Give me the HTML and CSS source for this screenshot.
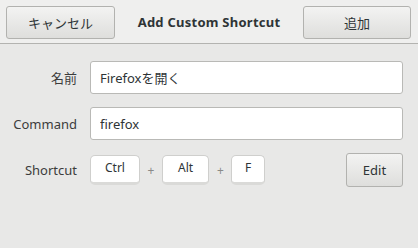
FILE: index.html
```html
<!doctype html>
<html lang="ja">
<head>
<meta charset="utf-8">
<meta name="viewport" content="width=device-width, initial-scale=1">
<title>Add Custom Shortcut</title>
<link rel="stylesheet" href="styles.css">
</head>
<body>

<div class="header">
	<button type="button" class="btn btn--cancel">キャンセル</button>
	<h1>Add Custom Shortcut</h1>
	<button type="button" class="btn btn--add">追加</button>
</div>

<div class="form">
	<label for="name">名前</label>
	<input type="text" id="name" value="Firefoxを開く">

	<label for="command">Command</label>
	<input type="text" id="command" value="firefox">

	<span class="label">Shortcut</span>
	<div class="shortcut">
		<span class="key">Ctrl</span>
		<span class="plus">+</span>
		<span class="key">Alt</span>
		<span class="plus">+</span>
		<span class="key">F</span>
		<button type="button" class="btn btn--edit">Edit</button>
	</div>
</div>

</body>
</html>
```

FILE: styles.css
```css
body {
	margin: 0;
	padding: 0;
	background: #e8e8e7;
	color: #2e3436;
	font-family: 'Noto Sans', 'Noto Sans CJK JP', sans-serif;
	font-size: 13px;
}

.header {
	display: flex;
	align-items: flex-start;
	justify-content: space-between;
	height: 37px;
	padding: 6px 7px 0 6px;
	background: #efefee;
	border-bottom: 1px solid #b3b3b0;
}

h1 {
	margin: 0;
	line-height: 33px;
	font-size: 13px;
	font-weight: 700;
	letter-spacing: 0.25px;
	color: #2e3436;
}

.btn {
	height: 33px;
	padding: 0;
	border: 1px solid #b2b2af;
	border-radius: 3px;
	background: linear-gradient(#f3f3f2, #dededc);
	color: #2e3436;
	font-family: inherit;
	font-size: 13px;
}
.btn--cancel {
	width: 109px;
}
.btn--add {
	width: 108px;
}

.form {
	display: grid;
	grid-template-columns: 77px 1fr;
	column-gap: 13px;
	row-gap: 13px;
	align-items: center;
	padding: 17px 15px 0 0;
}

label,
.label {
	text-align: right;
	color: #3c3c3c;
}

input[type="text"] {
	box-sizing: border-box;
	height: 33px;
	margin: 0;
	padding: 0 9px;
	border: 1px solid #b9b9b6;
	border-radius: 3px;
	background: #fff;
	color: #2e3436;
	font-family: inherit;
	font-size: 13px;
}

.shortcut {
	display: flex;
	align-items: center;
	height: 34px;
}

.key {
	box-sizing: border-box;
	height: 30px;
	padding: 0 14px 2px;
	border: 1px solid #cfcfcd;
	border-bottom: 3px solid #dadad8;
	border-radius: 5px;
	background: #fff;
	line-height: 24px;
	font-size: 12px;
}
.key:nth-child(3) {
	padding: 0 15.25px 2px;
}
.key:nth-child(5) {
	padding: 0 12.75px 2px;
}

.plus {
	margin: 0 7.5px;
	color: #8a8a88;
	font-size: 12px;
}

.btn--edit {
	width: 57px;
	height: 34px;
	margin-left: auto;
}
```
